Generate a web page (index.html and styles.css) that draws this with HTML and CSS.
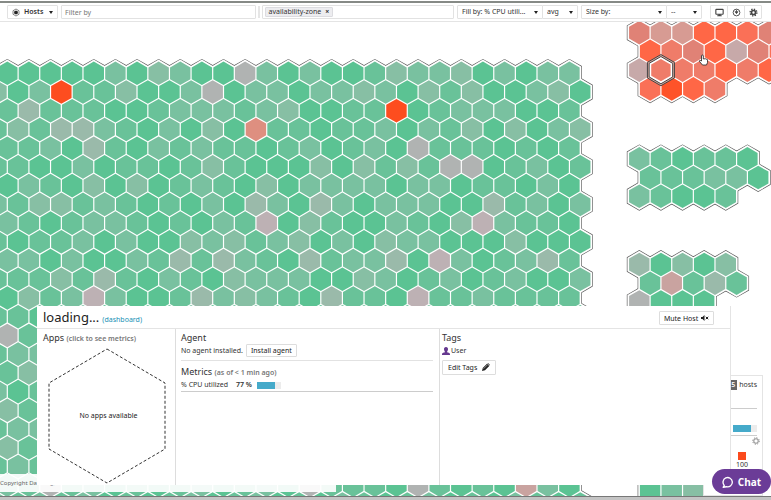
FILE: index.html
```
<!DOCTYPE html>
<html lang="en">
<head>
<meta charset="utf-8">
<title>Host Map</title>
<link rel="stylesheet" href="styles.css">
</head>
<body>
<header class="toolbar">
  <button class="box scope" type="button">
    <svg class="scope-icon" viewBox="0 0 16 16" aria-hidden="true"><path d="M8 1l6 3.5v7L8 15l-6-3.500v-7z" fill="none" stroke="#333" stroke-width="1.200"/><path d="M8 3.800l3.700 2.100v4.200L8 12.200l-3.700-2.100V5.900z" fill="#222"/></svg>
    <span>Hosts</span><span class="caret"></span>
  </button>
  <input class="box filter" type="text" placeholder="Filter by" aria-label="Filter by">
  <span class="handle"></span>
  <div class="box groups"><button class="tag" type="button">availability-zone <b>×</b></button></div>
  <div class="pair">
    <label class="box pick pick-wide"><select aria-label="Fill by"><option>Fill by: % CPU utili...</option></select><span class="caret"></span></label>
    <label class="box pick pick-small"><select aria-label="Fill aggregate"><option>avg</option></select><span class="caret"></span></label>
  </div>
  <div class="pair">
    <label class="box pick pick-wide"><select aria-label="Size by"><option>Size by:</option></select><span class="caret"></span></label>
    <label class="box pick pick-small"><select aria-label="Size aggregate"><option>--</option></select><span class="caret"></span></label>
  </div>
  <div class="tools">
    <button class="box tool" type="button" aria-label="Full screen"><svg viewBox="0 0 16 16"><rect x="1.500" y="2.500" width="13" height="8.500" rx="1" fill="none" stroke="#444" stroke-width="2"/><path d="M6 11h4v2h2v1.500H4V13h2z" fill="#444"/></svg></button>
    <button class="box tool" type="button" aria-label="Power"><svg viewBox="0 0 16 16"><circle cx="8" cy="8" r="6" fill="none" stroke="#444" stroke-width="1.600"/><path d="M8 3v5M5.500 6.500L8 10l2.500-3.500z" fill="#444" stroke="#444" stroke-width="1.400"/></svg></button>
    <button class="box tool" type="button" aria-label="Settings"><svg viewBox="0 0 16 16"><circle cx="8" cy="8" r="3.600" fill="none" stroke="#444" stroke-width="3"/><circle cx="8" cy="8" r="6" fill="none" stroke="#444" stroke-width="2.400" stroke-dasharray="2.350 2.350"/></svg></button>
  </div>
</header>

<main class="map">
  <svg class="hexes" id="hexes" role="img" aria-label="Host map"></svg>

  <footer class="copyright">Copyright Datadog, Inc.</footer>

  <aside class="legend">
    <div class="legend-count"><span class="badge">5</span> hosts</div>
    <div class="legend-bar"><span class="meter"><i></i></span></div>
    <button class="legend-gear" type="button" aria-label="Legend settings"><svg viewBox="0 0 16 16"><circle cx="8" cy="8" r="4.500" fill="none" stroke="#888" stroke-width="2"/><circle cx="8" cy="8" r="6.500" fill="none" stroke="#888" stroke-width="2" stroke-dasharray="2.550 2.550"/></svg></button>
    <div class="legend-max"><span class="swatch"></span><span>100</span></div>
  </aside>

  <section class="panel">
    <div class="panel-head">
      <h1>loading...</h1><a href="#dashboard">(dashboard)</a>
      <button class="btn mute" type="button">Mute Host <svg viewBox="0 0 16 12"><path d="M0 4h3l4-4v12L3 8H0z" fill="#222"/><path d="M9.500 3.500l5 5M14.500 3.500l-5 5" stroke="#222" stroke-width="2"/></svg></button>
    </div>
    <div class="panel-body">
      <div class="col">
        <h2>Apps <small>(click to see metrics)</small></h2>
        <div class="noapps">
          <svg viewBox="0 0 118 136" aria-hidden="true"><path d="M59 1l58 34v66l-58 34L1 101V35z" fill="none" stroke="#333" stroke-width="1" stroke-dasharray="3 2"/></svg>
          <p>No apps available</p>
        </div>
      </div>
      <div class="col">
        <h2>Agent</h2>
        <div class="line agent"><span>No agent installed.</span><button class="btn" type="button">Install agent</button></div>
        <h2>Metrics <small>(as of &lt; 1 min ago)</small></h2>
        <div class="line metric"><span>% CPU utilized</span><strong>77 %</strong><span class="meter"><i></i></span></div>
      </div>
      <div class="col">
        <h2>Tags</h2>
        <div class="user"><svg viewBox="0 0 16 16" aria-hidden="true"><path d="M8 0c3 0 4 2 4 4.500S10.500 8.500 10 10c1 1.500 6 1 6 5v1H0v-1c0-4 5-3.500 6-5-.5-1.500-2-3-2-5.500S5 0 8 0z" fill="#65388f"/></svg>User</div>
        <button class="btn edit" type="button">Edit Tags <svg viewBox="0 0 16 16"><path d="M0 16l1.500-6L10 1.500 14.500 6 6 14.500z" fill="#222"/><path d="M11 .8l1-.8 4 4-.8 1z" fill="#222"/><path d="M3 11.500L10.500 4" stroke="#fff"/></svg></button>
      </div>
    </div>
  </section>

  <button class="chat" type="button"><svg viewBox="0 0 16 16"><path d="M3 12.500A6.200 6.200 0 1 1 6 14.300L1.500 15z" fill="none" stroke="#fff" stroke-width="1.800" stroke-linejoin="round"/></svg>Chat</button>
</main>
<div class="bottom-bar"></div>
<script src="hexes.js"></script>
</body>
</html>
```
FILE: styles.css
```
* { box-sizing: border-box; }
body {
  margin: 0;
  min-height: 100vh;
  display: flex;
  flex-direction: column;
  background: #fff;
  color: #333;
  font: 7px/10px "Noto Sans", "Open Sans", sans-serif;
}
button, input, select { font: inherit; color: inherit; margin: 0; }
button { cursor: pointer; }
h1, h2, p { margin: 0; font-weight: 400; }

.toolbar {
  display: flex;
  align-items: center;
  gap: 3px;
  height: 22px;
  padding: 3px 10px 1px 7px;
  border-top: 1px solid #fff;
  border-bottom: 1px solid #e4e4e4;
  box-shadow: inset 0 2px #868a86;
}
.box {
  display: flex;
  align-items: center;
  height: 14px;
  background: #fff;
  border: 1px solid #e2e2e2;
  border-radius: 1px;
}
.scope { width: 51px; padding: 0 4px; gap: 4px; font-weight: 600; }
.scope-icon { width: 8px; height: 9px; }
.caret {
  margin-left: auto;
  border: 2px solid transparent;
  border-top: 3px solid #222;
  border-bottom: 0;
}
.filter { flex: 1; min-width: 0; padding: 0 3px; outline: 0; }
.filter::placeholder { color: #777; opacity: 1; }
.handle { width: 2px; height: 12px; margin: 0 -1px; background: #e6e6e6; }
.groups { flex: 1; min-width: 0; padding: 0 2px; }
.tag {
  height: 10px;
  padding: 0 3px;
  line-height: 8px;
  background: #ededf0;
  border: 1px solid #dcdce0;
  border-radius: 1px;
}
.tag b { margin-left: 2px; }
.pair { display: flex; }
.pick { padding-right: 4px; }
.pick-wide { width: 86px; }
.pick-small { width: 36px; margin-left: -1px; }
.pick select {
  flex: 1;
  min-width: 0;
  padding: 0 0 0 4px;
  border: 0;
  outline: 0;
  background: none;
  appearance: none;
}
.tools { display: flex; margin-left: 5px; }
.tool { width: 18px; justify-content: center; padding: 0; margin-right: -1px; }
.tool svg { width: 9px; height: 9px; }

.map { position: relative; flex: 1; overflow: hidden; }
.hexes { position: absolute; width: 100%; height: 100%; }
.outline { fill: #555; }
.moat { fill: #fff; }
.bottom-bar { height: 4px; background: #c4c4c4; border-top: 1px solid #777; }

.copyright {
  position: absolute;
  left: 0;
  bottom: 4px;
  width: 336px;
  height: 18px;
  font-size: 6px;
  line-height: 18px;
  color: #666;
  background: rgba(255, 255, 255, .92);
}

.legend {
  position: absolute;
  right: 8px;
  bottom: 0;
  width: 60px;
  height: 121px;
  padding: 4px 5px 0;
  background: #fff;
  border: 1px solid #e4e4e4;
}
.legend-count { height: 29px; text-align: right; border-bottom: 1px solid #ccc; }
.badge { display: inline-block; padding: 0 2px; color: #fff; background: #666; font-weight: 600; }
.legend-bar { display: flex; justify-content: flex-end; align-items: flex-end; height: 27px; padding-bottom: 3px; border-bottom: 1px solid #ccc; }
.meter { display: inline-block; width: 24px; height: 7px; background: #ececec; }
.meter i { display: block; width: 77%; height: 100%; background: #45aaca; }
.legend-gear { display: block; width: 8px; height: 8px; margin: 1px -3px 7px auto; padding: 0; border: 0; background: none; }
.legend-gear svg { display: block; width: 8px; height: 8px; }
.legend-max { display: flex; flex-direction: column; align-items: center; width: 14px; margin-left: auto; margin-right: 8px; }
.swatch { width: 8px; height: 8px; background: #fb4a1c; }

.panel {
  position: absolute;
  left: 37px;
  right: 40px;
  bottom: 11px;
  background: #fff;
  border-right: 1px solid #e4e4e4;
}
.panel-head {
  display: flex;
  align-items: baseline;
  gap: 3px;
  height: 23px;
  padding: 2px 16px 0 6px;
  border-bottom: 1px solid #e4e4e4;
}
.panel-head h1 { font-size: 13px; line-height: 18px; color: #222; }
.panel-head a { color: #1590b5; text-decoration: none; }
.btn {
  height: 13px;
  padding: 0 4px;
  line-height: 11px;
  background: #fff;
  border: 1px solid #ddd;
  border-radius: 1px;
  color: #222;
}
.mute { margin-left: auto; align-self: center; height: 14px; }
.mute svg { width: 8px; height: 6px; margin-left: 1px; }
.panel-body { display: grid; grid-template-columns: 139px 264px 1fr; height: 156px; }
.col { padding: 2px 6px 0 5px; border-right: 1px solid #ddd; }
.col:first-child { padding-left: 6px; }
.col:last-child { padding-left: 2px; border-right: 0; }
.col h2 { font-size: 9px; line-height: 13px; }
.col h2 small { font-size: 7px; font-weight: 600; color: #777; }
.noapps { display: grid; align-items: center; width: 118px; margin: 3px auto 0 5px; color: #222; }
.noapps svg, .noapps p { grid-area: 1 / 1; }
.noapps svg { display: block; width: 118px; height: 136px; }
.noapps p { padding-left: 3px; text-align: center; }
.line { display: flex; align-items: center; border-bottom: 1px solid #e2e2e2; }
.agent { gap: 3px; height: 17px; margin-bottom: 4px; padding-bottom: 3px; }
.metric { gap: 8px; height: 13px; border-color: #ccc; }
.metric .meter { margin-left: -3px; }
.metric strong { font-weight: 600; }
.user { display: flex; align-items: center; gap: 1px; height: 14px; }
.user svg { width: 8px; height: 8px; }
.edit { height: 15px; margin-top: 2px; padding: 0 5px; line-height: 13px; }
.edit svg { width: 8px; height: 8px; margin-left: 3px; vertical-align: -1px; }

.chat {
  position: absolute;
  right: 0;
  bottom: 2px;
  display: flex;
  align-items: center;
  justify-content: center;
  gap: 4px;
  width: 59px;
  height: 25px;
  border: 0;
  border-radius: 13px;
  background: #6b3c97;
  color: #fff;
  font: 700 10px/12px "Open Sans", sans-serif;
}
.chat svg { width: 12px; height: 12px; }
```
FILE: hexes.js
```
// Each cluster is a honeycomb of pointy-top hexagons; one letter per host.
const PITCH = 21.62;
const RADIUS = PITCH / Math.sqrt(3);
const ROW = RADIUS * 1.5;
const TOP = 22;

const COLORS = {
  a: '#5bc393', b: '#69c299', c: '#79c1a0', d: '#87bfa4', e: '#9abaaa',
  f: '#b0b3b2', p: '#bdb1b4', q: '#c9a3a0', s: '#de8f80', r: '#fd4d1f',
  A: '#fe5329', B: '#ff6746', C: '#fa7057', D: '#ef7c69', E: '#e08276',
  F: '#d79b93', G: '#c7a9a9'
};

const clusters = [
  { x: 7.3, y: 73.3, shift: false, left: true, rows: [
    'aaaaacadcaafcacaabdccdacacc',
    'dacrbbdaacfaccaccdcadbdaacdab',
    'bebbbaabcccbcdaabbrabcccaab',
    'bdbeecbacadasbbabbcacbdadacd',
    'bbcaebacbcbbabcabcafbbbabab',
    'bbaacabbabdbaaadadbdbffabcab',
    'acbadadabcbadacccCaccabbaca'.replace('C', 'c'),
    'cbddbcbabacaecaecacccaaebcac',
    'cbabccbabacbpadbaacbadpcbba',
    'babbcacaadcdbcdacadccaaadaaa',
    'ccacaacbebecbaebcceapcabceb',
    'bbbdbebacbadcccaadcabcabcaac',
    'adbcpcaabecdcbaebbapbbcbbbb',
    'bbabcababcabcabacbabcabacbab',
    'fbabcababcabcabacbabcabacba',
    'bccbcababcabcabacbabcabacbab',
    'bdabcababcabcabacbabcabacba',
    'cabbcababcabcabacbabcabacbab',
    'dbabcababcabcabacbabcabacba',
    'bccbcababcabcabacbabcabacbab',
    'dbabcababcabcabacbabcabacba',
    'bcbbcababcabcabacbabcabacbab',
    'cbfbcababcabcafbbbafbabaqca',
    'cbcbcababcabcabacbabcabacbab'
  ] },
  { x: 639.3, y: 32.7, rows: ['EFFBBCE', 'BDEBGEC', 'GDDDBDB', 'CABD'] },
  { x: 639.3, y: 158.8, rows: ['cbabba', 'bbbcca', 'cbaab'] },
  { x: 639.3, y: 264.5, rows: ['eadad', 'bqbeb', 'faaa'] },
  { x: 639.3, y: 471.3, rows: ['abc', 'acd'] }
];

function hexPoints(cx, cy, r) {
  const points = [];
  for (let i = 0; i < 6; i++) {
    const angle = Math.PI / 3 * i + Math.PI / 6;
    points.push((cx + r * Math.cos(angle)).toFixed(2) + ',' + (cy + r * Math.sin(angle)).toFixed(2));
  }
  return points.join(' ');
}

const layers = { outline: '', moat: '', fill: '' };
for (const cluster of clusters) {
  cluster.rows.forEach((row, j) => {
    const half = j % 2 ? PITCH / 2 * (cluster.left ? -1 : 1) : 0;
    const count = cluster.left ? (j % 2 ? 28 : 27) : row.length;
    for (let i = 0; i < count; i++) {
      const x = cluster.x + half + i * PITCH;
      const y = cluster.y + j * ROW - TOP;
      layers.outline += `<polygon points="${hexPoints(x, y, 14.4)}"/>`;
      layers.moat += `<polygon points="${hexPoints(x, y, 13.7)}"/>`;
      layers.fill += `<polygon points="${hexPoints(x, y, 11.8)}" fill="${COLORS[row[i]] || COLORS.b}"/>`;
    }
  });
}

// Selected host ring and the pointer hovering beside it.
const sx = 639.3 + PITCH, sy = 32.7 + 2 * ROW - TOP;
const ring =
  `<polygon points="${hexPoints(sx, sy, 15.6)}" fill="#d9a79d" stroke="#444" stroke-width="1"/>` +
  `<polygon points="${hexPoints(sx, sy, 13.6)}" fill="#fff" stroke="#444" stroke-width="1"/>` +
  `<polygon points="${hexPoints(sx, sy, 11.2)}" fill="${COLORS.D}"/>`;
const hand =
  `<path transform="translate(699 33)" fill="#fff" stroke="#222" stroke-width=".8" stroke-linejoin="round"
    d="M2.500 6V1q0-1 .9-1t.9 1v3q.8-.8 1.500 0 .8-.6 1.500.2 1.200-.4 1.200.9v2.500L7.500 10H3.500L.5 6.500q-.3-1.200.7-1z"/>`;

document.getElementById('hexes').innerHTML =
  `<g class="outline">${layers.outline}</g><g class="moat">${layers.moat}</g><g>${layers.fill}</g>${ring}${hand}`;
```
